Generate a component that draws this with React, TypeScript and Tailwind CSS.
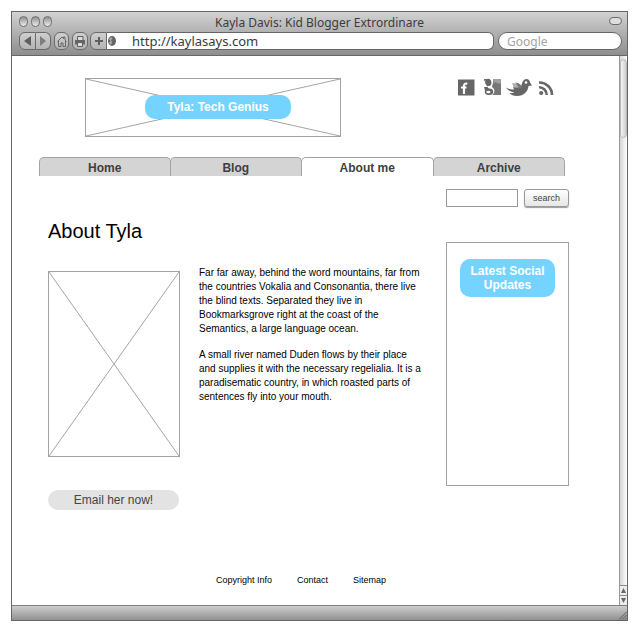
import React from "react";

const chromeFont = "font-['Noto_Sans',sans-serif]";

function Crossed() {
  return (
    <svg className="absolute inset-0 h-full w-full" viewBox="0 0 100 100" preserveAspectRatio="none" aria-hidden="true">
      <path d="M0 0L100 100M100 0L0 100" stroke="#a3a3a3" strokeWidth="1" vectorEffect="non-scaling-stroke" fill="none" />
    </svg>
  );
}

function Light() {
  return <span className="h-[11px] w-[9px] rounded-full border border-[#6f6f6f] bg-linear-to-b from-[#8f8f8f] to-[#eeeeee]" />;
}

const toolButton =
  "flex h-[18px] items-center justify-center border border-[#6b6b6b] bg-linear-to-b from-[#cfcfcf] to-[#b4b4b4]";

function BrowserHeader() {
  return (
    <header className={`border-b border-[#666] bg-linear-to-b from-[#d2d2d2] to-[#8e8e8e] pb-[5px] ${chromeFont}`}>
      <div className="grid h-5 grid-cols-[1fr_auto_1fr] items-center px-[7px]">
        <div className="flex gap-[3px] pb-[3px]">
          <Light />
          <Light />
          <Light />
        </div>
        <span className="pt-px text-[12px] leading-5 text-[#3c3c3c]">Kayla Davis: Kid Blogger Extrordinare</span>
        <button aria-label="Toggle toolbar" className="mb-[3px] mr-[-2px] h-2 w-[13px] justify-self-end rounded-full border border-[#6b6b6b] bg-[#dedede]" />
      </div>
      <div className="flex pr-[5px] pl-[7px]">
        <button aria-label="Back" className={`${toolButton} w-[17px] rounded-l-md`}>
          <svg width="8" height="10" viewBox="0 0 8 10"><path d="M7 0v10L0 5z" fill="#5f5f5f" /></svg>
        </button>
        <button aria-label="Forward" className={`${toolButton} w-[15px] rounded-r-md border-l-0`}>
          <svg width="8" height="10" viewBox="0 0 8 10"><path d="M1 0v10L7 5z" fill="#7d7d7d" /></svg>
        </button>
        <button aria-label="Home" className={`${toolButton} ml-[3px] w-[15px] rounded-md`}>
          <svg width="10" height="11" viewBox="0 0 10 11" fill="none" stroke="#666" strokeWidth="1">
            <path d="M0.500 5.500L5 1l1.500 1.500V1h1.500v3l1.500 1.500M1.500 5v5.500H4V7h2v3.500h2.500V5" />
          </svg>
        </button>
        <button aria-label="Print" className={`${toolButton} ml-[3px] w-4 rounded-md`}>
          <svg width="10" height="11" viewBox="0 0 10 11">
            <path d="M2.500 4V0.500h5.500V4" fill="#ddd" stroke="#5f5f5f" />
            <path d="M0 4h10v4.500H0z" fill="#666" />
            <path d="M2.500 6.500h5v4h-5z" fill="#ddd" stroke="#5f5f5f" />
          </svg>
        </button>
        <button aria-label="Add bookmark" className={`${toolButton} ml-[2px] w-[17px] rounded-l-md`}>
          <svg width="8" height="10" viewBox="0 0 8 10"><path d="M4 1v8M0 5h8" stroke="#5f5f5f" strokeWidth="2" /></svg>
        </button>
        <div className="flex h-[18px] flex-1 items-center rounded-r-md border border-l-0 border-[#666] bg-white pl-[1px]">
          <svg width="8" height="10" viewBox="0 0 8 10">
            <ellipse cx="4" cy="5" rx="4" ry="5" fill="#666" />
            <path d="M3 1L1 3l1.500 2L1 7l2 2L4 6 3 4l1.500-1z" fill="#aaa" />
          </svg>
          <input
            aria-label="Address"
            defaultValue="http://kaylasays.com"
            className="ml-4 h-4 min-w-0 flex-1 bg-transparent text-[13px] leading-4 text-[#3a3a3a] outline-none"
          />
        </div>
        <input
          aria-label="Google"
          placeholder="Google"
          className="ml-1 h-[18px] w-[124px] rounded-full border border-[#666] bg-white px-2 text-[12px] leading-4 outline-none placeholder:text-[#a3a3a3]"
        />
      </div>
    </header>
  );
}

function Scrollbar() {
  return (
    <div className="flex w-2 shrink-0 flex-col border-l border-[#999] bg-linear-to-r from-[#d4d4d4] to-white">
      <div className="mt-[3px] h-[79px] rounded-sm border border-[#b8b8b8] bg-linear-to-r from-[#f4f4f4] to-[#cfcfcf]" />
      <div className="flex-1" />
      <button aria-label="Scroll up" className="flex h-[10px] items-center justify-center border-t border-[#8a8a8a] bg-[#ececec]">
        <svg width="5" height="5" viewBox="0 0 5 5"><path d="M0 5h5L2.500 0z" fill="#666" /></svg>
      </button>
      <button aria-label="Scroll down" className="flex h-[10px] items-center justify-center border-t border-[#8a8a8a] bg-[#ececec]">
        <svg width="5" height="5" viewBox="0 0 5 5"><path d="M0 0h5L2.500 5z" fill="#666" /></svg>
      </button>
    </div>
  );
}

function SocialLinks() {
  return (
    <div className="mr-[14px] flex h-[18px] items-center">
      <a href="#facebook" aria-label="Facebook">
        <svg width="17" height="17" viewBox="0 0 17 17">
          <path d="M0 0.500h16.500v16H0z" fill="#666" />
          <path d="M9.300 4.800c-2-.7-3.300.2-3.300 2V15M3 8.500h5.500" fill="none" stroke="#fff" strokeWidth="2.200" />
        </svg>
      </a>
      <a href="#google" aria-label="Google" className="ml-[9px]">
        <svg width="18" height="18" viewBox="0 0 18 18">
          <path d="M7 1h10v16H7z" fill="#777" />
          <path d="M9 1h8v4.500h-3.500C12.500 4 11 4 9.500 5z" fill="#a0a0a0" />
          <path d="M6 0h3v5c0 2-1.500 2.500-1 4 2 1.500 3 3.500 2 5.500-.5 1.500-1.500 2.500-3 3H5V8z" fill="#fff" />
          <ellipse cx="4.300" cy="4.400" rx="3.100" ry="3.700" fill="#666" transform="rotate(-12 4.300 4.400)" />
          <path d="M3.500 8.500c0 1.500 1.500 1.700 2 3-1.500.2-3.500.3-4.500 1L0 9c1 .2 2.500.2 3.500-.5z" fill="#666" />
          <ellipse cx="5" cy="13.800" rx="4.200" ry="3.200" fill="#666" />
          <ellipse cx="4.400" cy="14" rx="2.100" ry="1.200" fill="#fff" />
          <path d="M0 1h3L0.500 3.500z" fill="#666" />
        </svg>
      </a>
      <a href="#twitter" aria-label="Twitter" className="ml-1">
        <svg width="26" height="18" viewBox="0 0 26 18">
          <path d="M6 5c3 .3 6 1 8 3.500L12 12 7.500 9z" fill="#b0b0b0" />
          <path d="M7 9c3.500 1.200 6.500 1 8.500-1.500C16 4 17.500 1 20.500 1c2 0 3.300 1.300 3.600 3.500L26 7.500l-3.500.5c-.6 5.500-4.500 10-11.500 10-3.500 0-6-1.200-7.500-3 2 .2 4-.1 5-.8C5 13.800 1.500 12 0 9.500c2.500 1.500 5.500 2.200 8 2z" fill="#666" />
          <path d="M9 4.500c2.500.2 5.500 1.500 7 3.800L14 11c-1.500-1-2-3.500-5-6.500z" fill="#777" />
          <circle cx="20" cy="4.500" r="1.300" fill="#fff" />
        </svg>
      </a>
      <a href="#rss" aria-label="RSS" className="ml-[6px]">
        <svg width="17" height="17" viewBox="0 0 17 17" fill="none" stroke="#666" strokeWidth="2.600">
          <circle cx="3.200" cy="14" r="2.100" fill="#666" stroke="none" />
          <path d="M1 8.300A7.500 7.500 0 0 1 8.700 16M1 3.500A12.500 12.500 0 0 1 14 16" />
        </svg>
      </a>
    </div>
  );
}

const tabs = ["Home", "Blog", "About me", "Archive"];

function Tabs() {
  return (
    <nav className="mt-5 mr-1 grid grid-cols-4">
      {tabs.map((tab) => (
        <a
          key={tab}
          href="#"
          aria-current={tab === "About me" ? "page" : undefined}
          className="-ml-px h-[19px] rounded-t-[5px] border border-b-0 border-[#a3a3a3] bg-[#d4d4d4] text-center text-[12px] leading-5 font-bold text-[#3f3f3f] first:ml-0 aria-[current=page]:bg-white"
        >
          {tab}
        </a>
      ))}
    </nav>
  );
}

export default function App() {
  return (
    <div className="flex min-h-screen flex-col bg-white p-[11px] pb-[10px] font-['Liberation_Sans',Arial,sans-serif]">
      <div className="flex flex-1 flex-col border border-[#666]">
        <BrowserHeader />
        <div className="flex flex-1">
          <div className="flex min-w-0 flex-1 flex-col">
            <main className="pt-[22px] pr-[50px] pl-[27px]">
              <div className="flex items-start justify-between">
                <div className="relative ml-[46px] flex h-[59px] w-64 items-center justify-center border border-[#a3a3a3] pb-[2px]">
                  <Crossed />
                  <span className="relative mr-[-10px] h-6 rounded-[10px] bg-[#75d4ff] px-[22px] text-[12px] leading-6 font-bold text-white">
                    Tyla: Tech Genius
                  </span>
                </div>
                <SocialLinks />
              </div>
              <Tabs />
              <div className="flex pl-[9px]">
                <div className="min-w-0 flex-1">
                  <h1 className="mt-10 text-[20px] leading-[30px] text-black">About Tyla</h1>
                  <div className="mt-[25px] flex gap-[19px]">
                    <div className="w-[132px] shrink-0">
                      <div className="relative h-[186px] border border-[#a3a3a3]">
                        <Crossed />
                      </div>
                      <button className="mt-[33px] h-5 w-[131px] rounded-full bg-[#e3e3e3] text-[12px] leading-5 text-[#444]">
                        Email her now!
                      </button>
                    </div>
                    <div className="mt-[-5px] mr-5 space-y-3 text-[10px] leading-[14px] text-black">
                      <p>
                        Far far away, behind the word mountains, far from the countries Vokalia and Consonantia, there live the
                        blind texts. Separated they live in Bookmarksgrove right at the coast of the Semantics, a large language
                        ocean.
                      </p>
                      <p>
                        A small river named Duden flows by their place and supplies it with the necessary regelialia. It is a
                        paradisematic country, in which roasted parts of sentences fly into your mouth.
                      </p>
                    </div>
                  </div>
                </div>
                <aside className="w-[123px] shrink-0 pt-[13px]">
                  <form className="flex gap-[6px]" onSubmit={(e) => e.preventDefault()}>
                    <input aria-label="Search" className="h-[18px] w-[72px] border border-[#999] bg-white px-1 text-[10px] outline-none" />
                    <button className="h-[18px] flex-1 rounded-[3px] border border-[#999] bg-linear-to-b from-white to-[#e6e6e6] text-[9px] leading-4 text-[#444] shadow-[0_1px_1px_#999]">
                      search
                    </button>
                  </form>
                  <section className="mt-[35px] h-[244px] border border-[#a3a3a3] px-[13px] pt-4">
                    <h2 className="rounded-[10px] bg-[#75d4ff] py-[5px] text-center text-[12px] leading-[14px] font-bold text-white">
                      Latest Social Updates
                    </h2>
                  </section>
                </aside>
              </div>
            </main>
            <footer className="mt-auto mr-[29px] flex justify-center gap-[25px] pt-8 pb-[19px] text-[9px] leading-3 text-black">
              <a href="#">Copyright Info</a>
              <a href="#">Contact</a>
              <a href="#">Sitemap</a>
            </footer>
          </div>
          <Scrollbar />
        </div>
        <div className="flex h-[15px] items-end justify-end border-t border-[#808080] bg-linear-to-b from-[#cecece] to-[#919191]">
          <svg width="8" height="9" viewBox="0 0 8 9" stroke="#5c5c5c" fill="none">
            <path d="M0 8.500L8 0.500M3 8.500L8 3.500M6 8.500L8 6.500" />
          </svg>
        </div>
      </div>
    </div>
  );
}
